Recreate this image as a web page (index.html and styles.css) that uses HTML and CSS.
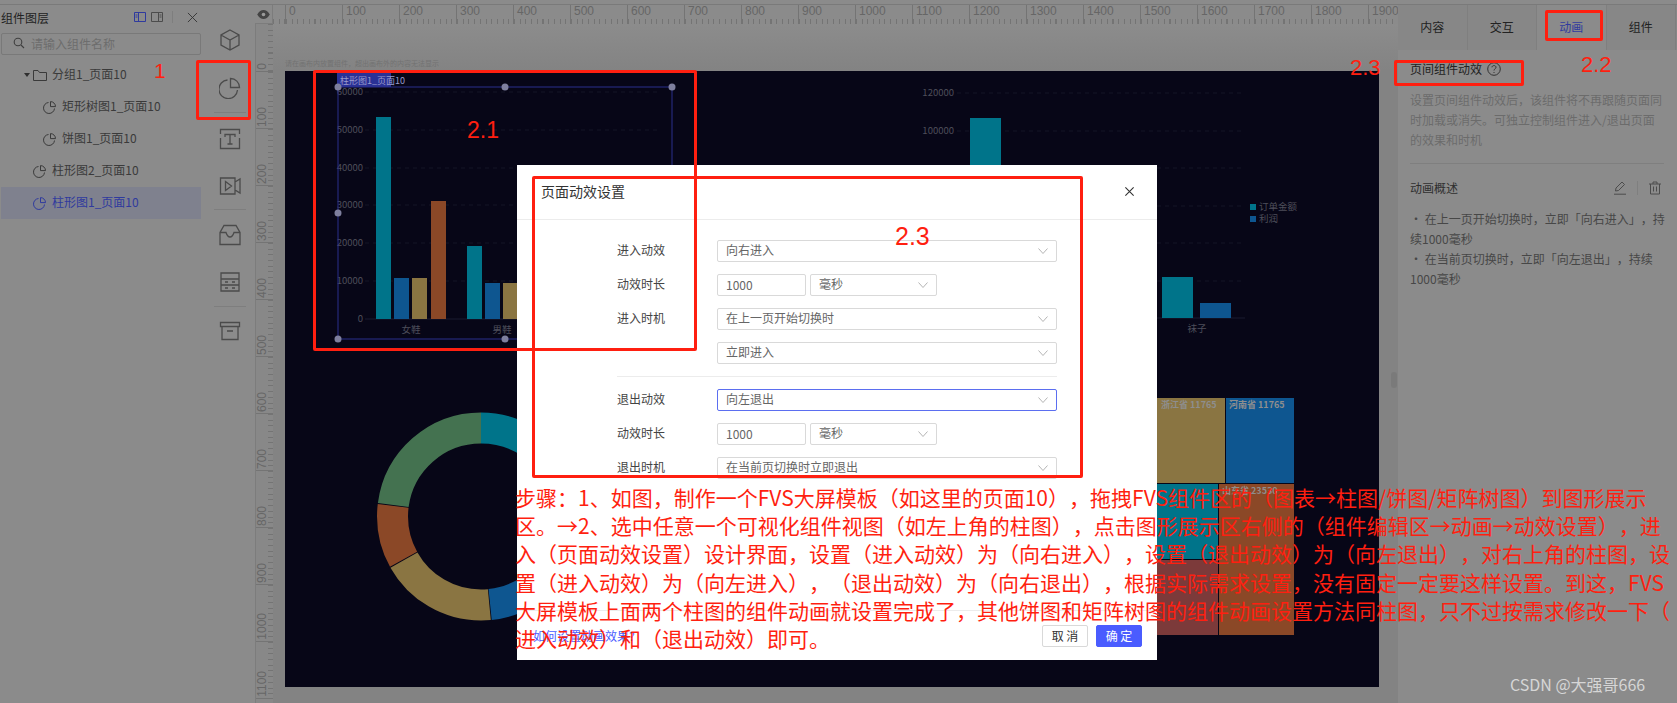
FILE: index.html
```html
<!DOCTYPE html>
<html lang="zh">
<head>
<meta charset="utf-8">
<title>页面动效设置</title>
<link rel="stylesheet" href="styles.css">
</head>
<body>
<div class="app">
  <aside class="layers">
    <div class="layers-head">
      <span class="layers-title">组件图层</span>
      <div class="head-tools">
        <svg class="tool blue" viewBox="0 0 12 12"><path d="M.5 1.500h11v9H.5zM4.500 1.500v9M1.500 4h2M1.500 6h2"/></svg>
        <svg class="tool" viewBox="0 0 12 12"><path d="M.5 1.500h11v9H.5zM7.500 1.500v9M8.500 4h2M8.500 6h2"/></svg>
        <i class="tool-sep"></i>
        <svg class="tool-x" viewBox="0 0 12 12"><path d="M1 1l10 10M11 1L1 11"/></svg>
      </div>
    </div>
    <div class="search">
      <svg class="search-ic" viewBox="0 0 12 12"><circle cx="5" cy="5" r="3.800"/><path d="M8 8l3 3"/></svg>
      <span>请输入组件名称</span>
    </div>
    <ul class="tree">
      <li class="row lvl1"><i class="caret"></i><svg class="folder" viewBox="0 0 14 12"><path d="M.5 1.500h4.500l1.500 2h7v8h-13z"/></svg><span>分组1_页面10</span></li>
      <li class="row lvl2"><svg class="pie-s" viewBox="0 0 13 13"><path d="M5.500 1.500a5.500 5.500 0 1 0 6 6M7.500 .6a5 5 0 0 1 5 5h-5z"/></svg><span>矩形树图1_页面10</span></li>
      <li class="row lvl2"><svg class="pie-s" viewBox="0 0 13 13"><path d="M5.500 1.500a5.500 5.500 0 1 0 6 6M7.500 .6a5 5 0 0 1 5 5h-5z"/></svg><span>饼图1_页面10</span></li>
      <li class="row lvl3"><svg class="pie-s" viewBox="0 0 13 13"><path d="M5.500 1.500a5.500 5.500 0 1 0 6 6M7.500 .6a5 5 0 0 1 5 5h-5z"/></svg><span>柱形图2_页面10</span></li>
      <li class="row lvl3 selected"><svg class="pie-s" viewBox="0 0 13 13"><path d="M5.500 1.500a5.500 5.500 0 1 0 6 6M7.500 .6a5 5 0 0 1 5 5h-5z"/></svg><span>柱形图1_页面10</span></li>
    </ul>
  </aside>

  <nav class="strip">
    <svg class="s-ic ic-cube" viewBox="0 0 22 22"><path d="M11 1l9 5v10l-9 5-9-5V6zM2 6l9 5 9-5M11 11v10"/></svg>
    <svg class="s-ic ic-pie" viewBox="0 0 22 22"><path d="M8.500 3a9.300 9.300 0 1 0 10 10M11.500 1.500a9 9 0 0 1 9 9h-9z"/></svg>
    <i class="strip-sep sep-a"></i>
    <svg class="s-ic ic-t" viewBox="0 0 22 22"><path d="M1.500 6V1.500h19V6M1.500 10v10.500h19V10M6 9V6.500h10V9M11 6.500V16M8.500 16h5"/></svg>
    <svg class="s-ic ic-video" viewBox="0 0 22 22"><path d="M16 7V3H1.500v16H16v-4l5 3V4l-5 3v8M6.500 6.500l6 4.500-6 4.500z"/></svg>
    <i class="strip-sep sep-b"></i>
    <svg class="s-ic ic-inbox" viewBox="0 0 22 22"><path d="M5 1.500h12l4 7v12H1v-12zM1 8.500h6c1 3 2 4.500 4 4.500s3-1.500 4-4.500h6"/></svg>
    <svg class="s-ic ic-server" viewBox="0 0 22 22"><path d="M2 2h18v18H2zM2 8h18M2 14h18M6 11h3M13 11h3M6 17h3M13 17h3"/></svg>
    <i class="strip-sep sep-c"></i>
    <svg class="s-ic ic-box" viewBox="0 0 22 22"><path d="M1.500 2.500h19v4h-19zM3 6.500v13h16v-13M8 11h6"/></svg>
  </nav>

  <main class="stage">
    <div class="ruler-h">
      <div class="eye"><svg viewBox="0 0 14 10"><path class="eye-p" d="M0 5c2-3.500 4.500-5 7-5s5 1.500 7 5c-2 3.500-4.500 5-7 5S2 8.500 0 5z"/><circle class="eye-c" cx="7" cy="5" r="2"/></svg></div>
      <div class="h-lead"></div>
      <span class="h-cell">0</span><span class="h-cell">100</span><span class="h-cell">200</span><span class="h-cell">300</span><span class="h-cell">400</span><span class="h-cell">500</span><span class="h-cell">600</span><span class="h-cell">700</span><span class="h-cell">800</span><span class="h-cell">900</span><span class="h-cell">1000</span><span class="h-cell">1100</span><span class="h-cell">1200</span><span class="h-cell">1300</span><span class="h-cell">1400</span><span class="h-cell">1500</span><span class="h-cell">1600</span><span class="h-cell">1700</span><span class="h-cell">1800</span><span class="h-cell">1900</span>
    </div>
    <div class="stage-body">
      <div class="ruler-v">
        <span class="v-cell v-first"><b>0</b></span><span class="v-cell"><b>100</b></span><span class="v-cell"><b>200</b></span><span class="v-cell"><b>300</b></span><span class="v-cell"><b>400</b></span><span class="v-cell"><b>500</b></span><span class="v-cell"><b>600</b></span><span class="v-cell"><b>700</b></span><span class="v-cell"><b>800</b></span><span class="v-cell"><b>900</b></span><span class="v-cell"><b>1000</b></span><span class="v-cell"><b>1100</b></span>
      </div>
      <div class="work">
        <p class="hint">请在画布内放置组件&#xFF0C;超出画布外的内容无法显示</p>
        <svg class="canvas" viewBox="285 71 1094 616">
          <g class="grid">
            <path d="M365 92H660M365 130H660M365 168H660M365 205H660M365 243H660M365 281H660"/>
            <path d="M957 93H1245M957 131H1245M957 168H1245M957 206H1245M957 243H1245M957 281H1245"/>
          </g>
          <path class="axis" d="M365 319H660M957 318H1245"/>
          <g class="c-teal">
            <rect x="376" y="117" width="15" height="202"/><rect x="467" y="246" width="15" height="73"/>
            <rect x="970" y="118" width="31" height="200"/><rect x="1162" y="277" width="31" height="41"/>
          </g>
          <g class="c-blue">
            <rect x="394" y="278" width="15" height="41"/><rect x="485" y="283" width="15" height="36"/>
            <rect x="1200" y="303" width="31" height="15"/>
          </g>
          <g class="c-tan">
            <rect x="412" y="278" width="15" height="41"/><rect x="503" y="283" width="15" height="36"/>
          </g>
          <rect class="c-rust" x="431" y="201" width="15" height="118"/>
          <g class="ax-lab end">
            <text x="363" y="95">60000</text><text x="363" y="133">50000</text><text x="363" y="171">40000</text><text x="363" y="208">30000</text><text x="363" y="246">20000</text><text x="363" y="284">10000</text><text x="363" y="322">0</text>
            <text x="954" y="96">120000</text><text x="954" y="134">100000</text>
          </g>
          <g class="ax-lab mid">
            <text x="411" y="333">女鞋</text><text x="502" y="333">男鞋</text><text x="1197" y="332">袜子</text>
          </g>
          <rect class="c-teal" x="1250" y="204" width="6" height="6"/>
          <rect class="c-blue" x="1250" y="216" width="6" height="6"/>
          <g class="ax-lab"><text x="1259" y="210">订单金额</text><text x="1259" y="222">利润</text></g>

          <rect class="sel-tag" x="337" y="73" width="54" height="14"/>
          <text class="sel-text" x="340" y="84">柱形图1_页面10</text>
          <rect class="sel-box" x="338" y="87" width="334" height="252"/>
          <g class="handle">
            <circle cx="338" cy="87" r="3.500"/><circle cx="505" cy="87" r="3.500"/><circle cx="672" cy="87" r="3.500"/>
            <circle cx="338" cy="213" r="3.500"/><circle cx="338" cy="339" r="3.500"/><circle cx="505" cy="339" r="3.500"/>
          </g>

          <g class="donut">
            <circle class="s-teal" cx="481" cy="516.500" r="88.500" pathLength="360" stroke-dasharray="119.500 240.500" transform="rotate(-90 481 516.500)"/>
            <circle class="s-blue" cx="481" cy="516.500" r="88.500" pathLength="360" stroke-dasharray="54 306" stroke-dashoffset="-120" transform="rotate(-90 481 516.500)"/>
            <circle class="s-tan" cx="481" cy="516.500" r="88.500" pathLength="360" stroke-dasharray="66 294" stroke-dashoffset="-174.500" transform="rotate(-90 481 516.500)"/>
            <circle class="s-rust" cx="481" cy="516.500" r="88.500" pathLength="360" stroke-dasharray="36 324" stroke-dashoffset="-241" transform="rotate(-90 481 516.500)"/>
            <circle class="s-green" cx="481" cy="516.500" r="88.500" pathLength="360" stroke-dasharray="82.500 277.500" stroke-dashoffset="-277.500" transform="rotate(-90 481 516.500)"/>
          </g>

          <g class="map">
            <rect class="c-tan" x="1100" y="398" width="125" height="85"/>
            <rect class="c-blue" x="1226" y="398" width="68" height="85"/>
            <rect class="c-teal" x="1100" y="484" width="118" height="75"/>
            <rect class="c-rust" x="1219" y="484" width="75" height="151"/>
            <rect class="c-wine" x="1100" y="560" width="118" height="75"/>
          </g>
          <g class="map-lab">
            <text x="1161" y="408">浙江省 11765</text><text x="1229" y="408">河南省 11765</text><text x="1222" y="494">山东省 23530</text>
          </g>
        </svg>
      </div>
    </div>
  </main>

  <aside class="props">
    <div class="tabs">
      <span class="tab">内容</span><span class="tab">交互</span><span class="tab active">动画</span><span class="tab">组件</span>
    </div>
    <div class="props-body">
      <h3 class="p-title">页间组件动效<svg class="help" viewBox="0 0 14 14"><circle cx="7" cy="7" r="6.300"/><path d="M5 5.300C5 3 9 3 9 5.300 9 6.800 7 6.800 7 8.500M7 10v1"/></svg></h3>
      <p class="p-desc">设置页间组件动效后&#xFF0C;该组件将不再跟随页面同时加载或消失。可独立控制组件进入/退出页面的效果和时机</p>
      <div class="p-head">
        <span>动画概述</span>
        <div class="p-tools">
          <svg class="p-ic" viewBox="0 0 14 14"><path d="M2.500 10l.5-3 6-6 2.500 2.500-6 6zM1 13.200h12"/></svg>
          <i class="p-sep"></i>
          <svg class="p-ic" viewBox="0 0 14 14"><path d="M1 3h12M5 3V1h4v2M2.500 3v10h9V3M5.500 5.500v5M8.500 5.500v5"/></svg>
        </div>
      </div>
      <p class="p-note">· 在上一页开始切换时&#xFF0C;立即「向右进入」&#xFF0C;持续1000毫秒</p>
      <p class="p-note">· 在当前页切换时&#xFF0C;立即「向左退出」&#xFF0C;持续1000毫秒</p>
    </div>
    <i class="scroll"></i>
  </aside>
</div>

<section class="dialog">
  <header class="d-head">
    <span>页面动效设置</span>
    <svg class="d-close" viewBox="0 0 12 12"><path d="M1.500 1.500l9 9M10.500 1.500l-9 9"/></svg>
  </header>
  <div class="d-body">
    <div class="form">
      <label class="f-label">进入动效</label>
      <div class="sel"><span>向右进入</span><svg class="chev" viewBox="0 0 10 6"><path d="M.5.500L5 5.500 9.500.500"/></svg></div>
      <label class="f-label">动效时长</label>
      <div class="pair"><div class="num">1000</div><div class="sel unit"><span>毫秒</span><svg class="chev" viewBox="0 0 10 6"><path d="M.5.500L5 5.500 9.500.500"/></svg></div></div>
      <label class="f-label">进入时机</label>
      <div class="sel"><span>在上一页开始切换时</span><svg class="chev" viewBox="0 0 10 6"><path d="M.5.500L5 5.500 9.500.500"/></svg></div>
      <span></span>
      <div class="sel"><span>立即进入</span><svg class="chev" viewBox="0 0 10 6"><path d="M.5.500L5 5.500 9.500.500"/></svg></div>
    </div>
    <hr class="f-line">
    <div class="form">
      <label class="f-label">退出动效</label>
      <div class="sel focus"><span>向左退出</span><svg class="chev" viewBox="0 0 10 6"><path d="M.5.500L5 5.500 9.500.500"/></svg></div>
      <label class="f-label">动效时长</label>
      <div class="pair"><div class="num">1000</div><div class="sel unit"><span>毫秒</span><svg class="chev" viewBox="0 0 10 6"><path d="M.5.500L5 5.500 9.500.500"/></svg></div></div>
      <label class="f-label">退出时机</label>
      <div class="sel"><span>在当前页切换时立即退出</span><svg class="chev" viewBox="0 0 10 6"><path d="M.5.500L5 5.500 9.500.500"/></svg></div>
    </div>
  </div>
  <footer class="d-foot">
    <a class="d-link">如何设置动画效果?</a>
    <div class="d-btns"><button class="btn">取 消</button><button class="btn primary">确 定</button></div>
  </footer>
</section>

<i class="mark m-one"></i>
<i class="mark m-chart"></i>
<i class="mark m-dialog"></i>
<i class="mark m-tab"></i>
<i class="mark m-title"></i>
<span class="note n-1">1</span>
<span class="note n-21">2.1</span>
<span class="note n-22">2.2</span>
<span class="note n-23a">2.3</span>
<span class="note n-23b">2.3</span>
<div class="steps">
  <div>步骤&#xFF1A;1、如图&#xFF0C;制作一个FVS大屏模板&#xFF08;如这里的页面10&#xFF09;&#xFF0C;拖拽FVS组件区的&#xFF08;图表→柱图/饼图/矩阵树图&#xFF09;到图形展示</div>
  <div>区。→2、选中任意一个可视化组件视图&#xFF08;如左上角的柱图&#xFF09;&#xFF0C;点击图形展示区右侧的&#xFF08;组件编辑区→动画→动效设置&#xFF09;&#xFF0C;进</div>
  <div>入&#xFF08;页面动效设置&#xFF09;设计界面&#xFF0C;设置&#xFF08;进入动效&#xFF09;为&#xFF08;向右进入&#xFF09;&#xFF0C;设置&#xFF08;退出动效&#xFF09;为&#xFF08;向左退出&#xFF09;&#xFF0C;对右上角的柱图&#xFF0C;设</div>
  <div>置&#xFF08;进入动效&#xFF09;为&#xFF08;向左进入&#xFF09;&#xFF0C;&#xFF08;退出动效&#xFF09;为&#xFF08;向右退出&#xFF09;&#xFF0C;根据实际需求设置&#xFF0C;没有固定一定要这样设置。到这&#xFF0C;FVS</div>
  <div>大屏模板上面两个柱图的组件动画就设置完成了&#xFF0C;其他饼图和矩阵树图的组件动画设置方法同柱图&#xFF0C;只不过按需求修改一下&#xFF08;</div>
  <div>进入动效&#xFF09;和&#xFF08;退出动效&#xFF09;即可。</div>
</div>
<span class="wm">CSDN @大强哥666</span>
</body>
</html>
```

FILE: styles.css
```css
* { box-sizing: border-box; }
html, body { margin: 0; height: 703px; overflow: hidden; }
body { position: relative; font-family: "Noto Sans CJK SC", "Liberation Sans", sans-serif; font-size: 12px; color: #2b2b2b; background: #8b8b8b; text-spacing-trim: space-all; }
ul, h3, p { margin: 0; padding: 0; list-style: none; }
svg { display: block; fill: none; }

.app { display: flex; height: 703px; padding-top: 5px; }
.app::before { content: ""; position: absolute; left: 0; right: 0; top: 4px; height: 1px; background: #7a7a7a; }

/* layers panel */
.layers { width: 204px; flex: none; padding-left: 1px; }
.layers-head { display: flex; justify-content: space-between; align-items: center; height: 26px; padding-right: 6px; padding-bottom: 2px; }
.layers-title { color: #222; }
.head-tools { display: flex; align-items: center; gap: 5px; }
.tool { width: 12px; height: 12px; stroke: #4c4c4c; stroke-width: 1; }
.tool.blue { stroke: #2f3a9e; }
.tool-sep { width: 1px; height: 12px; background: #7e7e7e; margin: 0 9px 0 4px; }
.tool-x { width: 11px; height: 11px; stroke: #333; stroke-width: 1; }
.search { display: flex; align-items: center; gap: 6px; width: 200px; height: 22px; margin-top: 2px; padding-left: 11px; padding-bottom: 2px; border: 1px solid #797979; border-radius: 2px; color: #6d6d6d; }
.search-ic { width: 12px; height: 12px; stroke: #3f3f3f; stroke-width: 1.100; }
.tree { margin-top: 4px; }
.row { display: flex; align-items: center; width: 200px; height: 32px; color: #3a3a3a; }
.row span { line-height: 30px; height: 32px; }
.lvl1 { padding-left: 23px; }
.lvl2 { padding-left: 42px; gap: 6px; }
.lvl3 { padding-left: 32px; gap: 6px; }
.caret { width: 0; height: 0; margin-right: 3px; border: 3px solid transparent; border-top: 4px solid #2f2f2f; border-bottom: 0; }
.folder { width: 14px; height: 12px; margin-right: 5px; stroke: #3a3a3a; stroke-width: 1; }
.pie-s { width: 13px; height: 13px; stroke: #3a3a3a; stroke-width: 1; flex: none; }
.selected { background: #7f818e; color: #2f3a9e; }
.selected .pie-s { stroke: #2f3a9e; }

/* tool strip */
.strip { width: 51px; flex: none; display: flex; flex-direction: column; align-items: center; }
.s-ic { width: 22px; height: 22px; stroke: #4b4b4b; stroke-width: 1.300; flex: none; }
.ic-cube { margin-top: 24px; }
.ic-pie { margin-top: 26px; }
.sep-a { margin-top: 13px; }
.ic-t { margin-top: 15px; }
.ic-video { margin-top: 25px; }
.sep-b { margin-top: 12px; }
.ic-inbox { margin-top: 14px; }
.ic-server { margin-top: 25px; }
.sep-c { margin-top: 13px; }
.ic-box { margin-top: 13px; }
.strip-sep { display: block; width: 32px; height: 1px; background: #7e7e7e; flex: none; }

/* stage */
.stage { width: 1143px; flex: none; display: flex; flex-direction: column; min-width: 0; }
.ruler-h { display: flex; height: 19px; flex: none; overflow: hidden; background: #8b8b8b; font-family: "Liberation Sans", sans-serif; color: #666; }
.eye { width: 18px; flex: none; display: flex; align-items: center; justify-content: center; border-right: 1px solid #7c7c7c; border-bottom: 1px solid #7c7c7c; }
.eye svg { width: 13px; height: 9px; }
.eye-p { fill: #444; }
.eye-c { fill: #9a9a9a; }
.h-lead { width: 12px; flex: none; background: repeating-linear-gradient(to right, #747474 0 1px, transparent 1px 5.700px) bottom / 100% 5px no-repeat; }
.h-cell { width: 57px; flex: none; padding-left: 3px; line-height: 13px; border-left: 1px solid #747474; font-size: 12px; background: repeating-linear-gradient(to right, #747474 0 1px, transparent 1px 5.700px) bottom / 100% 5px no-repeat; }
.stage-body { display: flex; flex: 1; min-height: 0; }
.ruler-v { width: 18px; flex: none; display: flex; flex-direction: column; overflow: hidden; background-color: #888; font-family: "Liberation Sans", sans-serif; color: #666; border-left: 1px solid #7c7c7c; }
.v-cell { height: 57px; flex: none; display: flex; align-items: flex-end; border-bottom: 1px solid #747474; padding: 0 0 1px 1px; background: repeating-linear-gradient(to bottom, #747474 0 1px, transparent 1px 5.700px) right / 5px 100% no-repeat; }
.v-first { height: 48px; }
.v-cell b { font-weight: 400; font-size: 12px; line-height: 11px; writing-mode: vertical-rl; transform: rotate(180deg); }
.work { flex: 1; position: relative; display: flex; flex-direction: column; align-items: flex-start; padding-left: 12px; background: linear-gradient(#8c8c8c, #838383 46px); }
.hint { height: 47px; padding-top: 32px; font-size: 7px; line-height: 14px; color: #727272; }
.canvas { width: 1094px; height: 616px; background: #070617; flex: none; }
.grid path { stroke: #141526; stroke-dasharray: 4 4; }
.axis { stroke: #1a1b30; }
.c-teal { fill: #00748a; }
.c-blue { fill: #0e5690; }
.c-tan { fill: #8a7542; }
.c-rust { fill: #8b4827; }
.c-wine { fill: #7c3a3a; }
.ax-lab text { font-size: 9.500px; fill: #4e4e5a; }
.end text { text-anchor: end; }
.mid text { text-anchor: middle; }
.sel-tag { fill: #2a3196; }
.sel-text { font-size: 9px; fill: #9a9ccc; }
.sel-box { stroke: #2a2f8c; stroke-width: 1; }
.handle circle { fill: #7e7f9e; }
.donut circle { fill: none; stroke-width: 31; }
.s-teal { stroke: #00748a; }
.s-blue { stroke: #0e5690; }
.s-tan { stroke: #8a7542; }
.s-rust { stroke: #8b4827; }
.s-green { stroke: #447250; }
.map-lab text { font-size: 9px; font-weight: 700; fill: #8e8e8e; }

/* properties */
.props { flex: 1; min-width: 0; position: relative; }
.tabs { display: flex; height: 45px; background: #878787; }
.tab { width: 69.500px; text-align: center; line-height: 43px; border-right: 1px solid #7f7f7f; color: #222; }
.active { color: #2f3a9e; background: #8b8b8b; }
.props-body { padding: 8px 13px 0 12px; }
.p-title { display: flex; align-items: center; gap: 5px; height: 20px; font-size: 12px; font-weight: 400; color: #222; }
.help { width: 14px; height: 14px; stroke: #333; stroke-width: 1; margin-top: 2px; }
.p-desc { margin-top: 12px; line-height: 20px; color: #6b6b6b; padding-bottom: 13px; border-bottom: 1px solid #7f7f7f; }
.p-head { display: flex; align-items: center; justify-content: space-between; height: 20px; margin-top: 13px; color: #2f2f2f; }
.p-tools { display: flex; align-items: center; padding-right: 2px; }
.p-ic { width: 14px; height: 14px; stroke: #4c4c4c; stroke-width: 1; margin-top: 2px; }
.p-sep { width: 1px; height: 14px; background: #7f7f7f; margin: 2px 10px 0; }
.p-note { margin-right: -8px; line-height: 20px; color: #474747; }
.p-head + .p-note { margin-top: 12px; }
.scroll { position: absolute; left: -7px; top: 367px; width: 6px; height: 16px; border-radius: 3px; background: #7a7a7a; }

/* dialog */
.dialog { position: absolute; left: 517px; top: 165px; width: 640px; height: 495px; background: #fff; display: flex; flex-direction: column; color: #333; }
.d-head { display: flex; align-items: center; justify-content: space-between; height: 55px; flex: none; padding: 0 22px 2px 24px; border-bottom: 1px solid #ececec; font-size: 14px; color: #333; }
.d-close { width: 11px; height: 11px; stroke: #333; stroke-width: 1.200; }
.d-body { flex: 1; padding: 20px 0 0 100px; }
.form { display: grid; grid-template-columns: 48px 340px; grid-auto-rows: 22px; column-gap: 52px; row-gap: 12px; }
.f-label { line-height: 19px; color: #444; white-space: nowrap; }
.sel { display: flex; align-items: center; justify-content: space-between; padding: 0 8px; border: 1px solid #d9d9d9; border-radius: 2px; color: #666; }
.sel span { line-height: 18px; height: 20px; }
.focus { border-color: #5b6ef0; }
.chev { width: 10px; height: 6px; stroke: #b4b4b4; }
.pair { display: flex; gap: 4px; }
.num { width: 89px; padding-left: 8px; line-height: 19px; border: 1px solid #d9d9d9; border-radius: 2px; color: #666; }
.unit { width: 127px; }
.f-line { width: 440px; height: 1px; margin: 12px 0; border: 0; background: #ececec; }
.d-foot { display: flex; align-items: center; justify-content: space-between; height: 50px; flex: none; padding: 0 15px 0 16px; border-top: 1px solid #ececec; }
.d-link { color: #4a5cff; }
.d-btns { display: flex; gap: 8px; }
.btn { width: 46px; height: 22px; padding: 0; font: inherit; line-height: 18px; border: 1px solid #d9d9d9; border-radius: 2px; background: #fff; color: #333; }
.primary { background: #4a5cff; border-color: #4a5cff; color: #fff; }

/* annotations */
.mark { position: absolute; display: block; border: 3px solid #ff1f10; border-radius: 2px; }
.m-one { left: 196px; top: 60px; width: 55px; height: 60px; }
.m-chart { left: 313px; top: 70px; width: 384px; height: 281px; }
.m-dialog { left: 532px; top: 176px; width: 551px; height: 302px; }
.m-tab { left: 1545px; top: 10px; width: 58px; height: 31px; }
.m-title { left: 1394px; top: 60px; width: 130px; height: 26px; }
.note { position: absolute; color: #ff1f10; font-family: "Liberation Sans", sans-serif; font-size: 22px; line-height: 24px; }
.n-1 { left: 154px; top: 59px; font-size: 21px; }
.n-21 { left: 467px; top: 118px; font-size: 23px; }
.n-22 { left: 1581px; top: 53px; }
.n-23a { left: 1350px; top: 56px; }
.n-23b { left: 895px; top: 224px; font-size: 25px; }
.steps { position: absolute; left: 515px; top: 483px; font-size: 21px; line-height: 28.200px; color: #ff1f10; white-space: nowrap; }
.wm { position: absolute; left: 1510px; top: 672px; font-size: 16px; line-height: 24px; color: #d6d6d6; white-space: nowrap; }
```
